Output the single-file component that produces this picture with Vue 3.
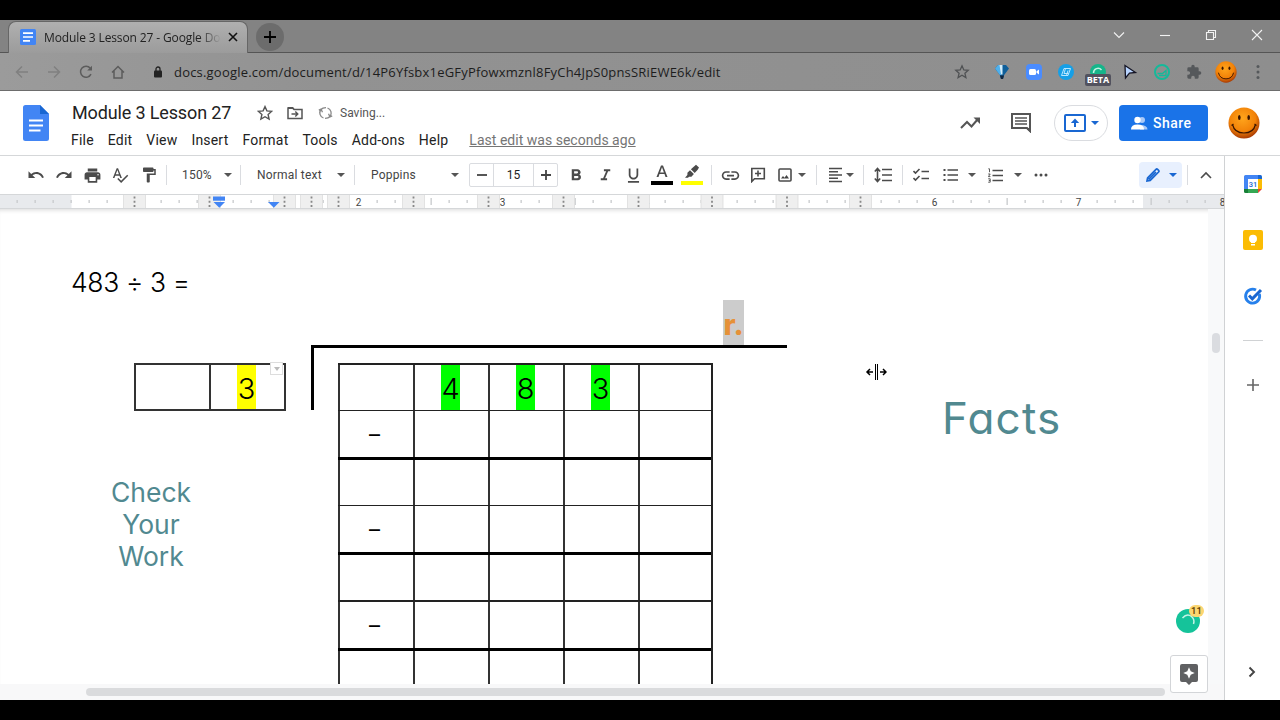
<script setup>
import { ref } from 'vue'

const menus = ['File', 'Edit', 'View', 'Insert', 'Format', 'Tools', 'Add-ons', 'Help']
const menuOpen = ref('')

// ruler: 144px per inch, 18px between ticks
const ticks = Array.from({ length: 69 }, (_, i) => i - 4).map((k) => ({
  k,
  x: 71 + k * 18,
  half: k % 8 === 4,
  label: k > 0 && k % 8 === 0 ? k / 8 : ''
}))
const columnStops = [134.5, 209.5, 284.5, 311.5, 338.5, 413.5, 488.5, 563.5, 638.5, 712, 787, 860.5]

const rows = [
  ['', '4', '8', '3', ''],
  ['–', '', '', '', ''],
  ['', '', '', '', ''],
  ['–', '', '', '', ''],
  ['', '', '', '', ''],
  ['–', '', '', '', ''],
  ['', '', '', '', '']
]
</script>

<template>
  <div class="screen">
    <!-- browser tabs -->
    <div class="tabstrip">
      <div class="tab">
        <svg class="tab-icon" width="16" height="16" viewBox="0 0 16 16">
          <rect width="16" height="16" rx="1.5" fill="#4285f4" />
          <path d="M3 4.2h10M3 8h10M3 11.8h7" stroke="#fff" stroke-width="1.7" />
        </svg>
        <span class="tab-title">Module 3 Lesson 27 - Google Do</span>
        <svg class="tab-close" width="10" height="10" viewBox="0 0 10 10"><path d="M1 1l8 8M9 1L1 9" stroke="#111" stroke-width="1.6" /></svg>
      </div>
      <div class="new-tab">
        <svg width="14" height="14" viewBox="0 0 14 14"><path d="M7 1v12M1 7h12" stroke="#000" stroke-width="1.8" /></svg>
      </div>
      <div class="window-buttons">
        <svg width="12" height="12" viewBox="0 0 12 12"><path d="M1 3.5l5 5 5-5" /></svg>
        <svg width="12" height="12" viewBox="0 0 12 12"><path d="M1 6.5h10" /></svg>
        <svg width="12" height="12" viewBox="0 0 12 12"><path d="M1.5 3.5h7v7h-7zM3.5 3V1.5h7v7H9" /></svg>
        <svg width="12" height="12" viewBox="0 0 12 12"><path d="M1 1l10 10M11 1L1 11" /></svg>
      </div>
    </div>

    <div class="addressbar">
      <svg class="nav dim" viewBox="0 0 14 14"><path d="M13 7H2M7 1.500L1.500 7 7 12.500" /></svg>
      <svg class="nav dim" viewBox="0 0 14 14"><path d="M1 7h11M7 1.500L12.500 7 7 12.500" /></svg>
      <svg class="nav" viewBox="0 0 14 14"><path d="M12 9.200A5.500 5.500 0 1 1 11.300 3.300" /><path d="M13 .8v4.800H8.200z" class="solid" /></svg>
      <svg class="nav" viewBox="0 0 14 14"><path d="M1 7.500L7 1.500l6 6M3 6v7h8V6" /></svg>
      <svg class="lock" viewBox="0 0 10 12"><rect x="1" y="4.500" width="8" height="7" rx="1" fill="#222" /><path d="M3 5V3a2 2 0 0 1 4 0v2" fill="none" stroke="#222" stroke-width="1.300" /></svg>
      <span class="url">docs.google.com/document/d/14P6Yfsbx1eGFyPfowxmznl8FyCh4JpS0pnsSRiEWE6k/edit</span>
      <div class="extensions">
        <svg width="16" height="16" viewBox="0 0 16 16"><path d="M8 1.800l1.800 4.100 4.400.4-3.300 2.900 1 4.400L8 11.300l-3.900 2.300 1-4.400L1.800 6.300l4.400-.4z" fill="none" stroke="#505254" stroke-width="1.300" /></svg>
        <svg width="16" height="16" viewBox="0 0 16 16">
          <path d="M1 4.500L4 1h8l3 3.500-4.800 6.500-1.200 4H7l-1.200-4z" fill="#0f5f9a" />
          <path d="M1 4.500L4 1h3v10H5.800z" fill="#4fb0ec" />
          <path d="M5.500 1h3v9.500H7z" fill="#d3edfb" />
          <path d="M6 11.500h4L9 15H7z" fill="#12263f" />
        </svg>
        <svg width="16" height="16" viewBox="0 0 16 16"><rect width="16" height="16" rx="4" fill="#4a8cff" /><rect x="3" y="5" width="7" height="6" rx="1.500" fill="#fff" /><path d="M10.500 7.200L13 5.500v5l-2.500-1.700z" fill="#fff" /></svg>
        <svg width="16" height="16" viewBox="0 0 16 16"><circle cx="8" cy="8" r="8" fill="#169fe6" /><path d="M6 4.500h6.500L10 11.500H3.500zM7.500 4.500L6 9.500h4.500M10 6.500L8.500 11.500" fill="none" stroke="#b9e7ff" stroke-width="1" /></svg>
        <div class="beta-ext">
          <svg width="16" height="16" viewBox="0 0 16 16"><circle cx="8" cy="8" r="8" fill="#15b58a" /><path d="M3.500 9a4.500 4.500 0 0 1 8-3" fill="none" stroke="#c2f2e2" stroke-width="1.500" /></svg>
          <span class="beta">BETA</span>
        </div>
        <svg width="16" height="16" viewBox="0 0 16 16"><path d="M3 1.500l10.500 7-6 .7L3.500 14z" fill="#b8d4ff" stroke="#151525" stroke-width="1.300" /></svg>
        <svg width="16" height="16" viewBox="0 0 16 16"><circle cx="8" cy="8" r="7" fill="none" stroke="#15b99a" stroke-width="2" /><path d="M3.500 9.500h5l3.500-3v5H5" fill="none" stroke="#15b99a" stroke-width="1.300" /></svg>
        <svg width="16" height="16" viewBox="0 0 24 24"><path d="M20.500 11H19V7a2 2 0 0 0-2-2h-4V3.500a2.500 2.500 0 0 0-5 0V5H4a2 2 0 0 0-2 2v3.800h1.500a2.700 2.700 0 0 1 0 5.400H2V20a2 2 0 0 0 2 2h3.800v-1.500a2.700 2.700 0 0 1 5.400 0V22H17a2 2 0 0 0 2-2v-4h1.500a2.500 2.500 0 0 0 0-5z" fill="#55585b" /></svg>
        <svg width="22" height="22" viewBox="0 0 32 32"><circle cx="16" cy="16" r="15.500" fill="url(#smile)" /><ellipse cx="11" cy="10.500" rx="1.400" ry="2.600" fill="#3a1500" /><ellipse cx="21" cy="10.500" rx="1.400" ry="2.600" fill="#3a1500" /><path d="M5 17q2 9 11 9t11-9" fill="none" stroke="#3a1500" stroke-width="1.400" /></svg>
        <svg width="4" height="16" viewBox="0 0 4 16" class="kebab"><circle cx="2" cy="2.500" r="1.500" /><circle cx="2" cy="8" r="1.500" /><circle cx="2" cy="13.500" r="1.500" /></svg>
      </div>
    </div>

    <!-- document header -->
    <header class="header">
      <svg class="docs-logo" width="26" height="36" viewBox="0 0 26 36">
        <path d="M2.500 0H17l9 9v24.500a2.500 2.500 0 0 1-2.500 2.500h-21A2.500 2.500 0 0 1 0 33.500v-31A2.500 2.500 0 0 1 2.500 0z" fill="#4285f4" />
        <path d="M17 0l9 9h-9z" fill="#1967d2" />
        <path d="M6 15.500h14M6 20.500h14M6 25.500h11.500" stroke="#fff" stroke-width="1.800" />
      </svg>
      <div class="title-area">
        <div class="title-row">
          <span class="doc-title">Module 3 Lesson 27</span>
          <svg class="star" width="16" height="16" viewBox="0 0 16 16"><path d="M8 1.600l1.900 4.300 4.700.5-3.500 3.100 1 4.600L8 11.700l-4.100 2.400 1-4.600-3.500-3.100 4.700-.5z" fill="none" stroke="#555" stroke-width="1.400" /></svg>
          <svg class="move" width="16" height="14" viewBox="0 0 16 14"><path d="M1 2h4.500L7 3.500h8v9H1z" fill="none" stroke="#555" stroke-width="1.500" /><path d="M1 1h5l1.500 2H1z" fill="#555" /><path d="M4.500 8h6M8.300 5.500L10.800 8l-2.500 2.500" fill="none" stroke="#555" stroke-width="1.400" /></svg>
          <svg class="sync" width="15" height="14" viewBox="0 0 15 14"><path d="M5.500 12A5.400 5.400 0 0 1 3 3.500Q4.500 1.600 8 1.600M9.500 2a5.400 5.400 0 0 1 2.500 8.500Q10.500 12.400 7 12.400M.8 4.200L3 3.200l1.500 3M14.200 9.800l-2.200 1-1.500-3" fill="none" stroke="#888" stroke-width="1.300" /></svg>
          <span class="saving">Saving...</span>
        </div>
        <nav class="menu-row">
          <span v-for="menu in menus" :key="menu" :class="['menu', { open: menuOpen === menu }]" @click="menuOpen = menu">{{ menu }}</span>
          <span class="last-edit">Last edit was seconds ago</span>
        </nav>
      </div>
      <div class="header-actions">
        <svg class="trend" width="20" height="12" viewBox="0 0 20 12"><path d="M1 11l6-6 4.500 4.500L18 2" fill="none" stroke="#555" stroke-width="2" /><path d="M13.500.5H20V7z" fill="#555" /></svg>
        <svg class="comments" width="20" height="20" viewBox="0 0 20 20"><path d="M1 1h18v17l-3-3H1z" fill="none" stroke="#555" stroke-width="2" /><path d="M4 5h12M4 8h12M4 11h12" stroke="#555" stroke-width="1.700" /><path d="M14.500 15H20v5z" fill="#555" /></svg>
        <button type="button" class="present">
          <svg width="22" height="18" viewBox="0 0 22 18"><rect x="1" y="1" width="20" height="16" rx="1" fill="none" stroke="#1967d2" stroke-width="2" /><path d="M11 13V8" stroke="#1967d2" stroke-width="2" /><path d="M6.800 9L11 4.500 15.200 9z" fill="#1967d2" /></svg>
          <i class="caret blue"></i>
        </button>
        <button type="button" class="share">
          <svg width="17" height="14" viewBox="0 0 17 14"><circle cx="11" cy="4" r="3" fill="#a9c8f8" /><path d="M9 13.500V9q7.500 0 7.500 4.500z" fill="#a9c8f8" /><circle cx="6.500" cy="4" r="3.200" fill="#fff" /><path d="M0 13.500q0-5 6.500-5t6.500 5z" fill="#fff" /></svg>
          <span>Share</span>
        </button>
        <svg class="avatar" width="32" height="32" viewBox="0 0 32 32">
          <defs>
            <radialGradient id="smile" cx="45%" cy="35%" r="65%"><stop offset="0" stop-color="#ffa51c" /><stop offset=".65" stop-color="#f28208" /><stop offset="1" stop-color="#a93b03" /></radialGradient>
          </defs>
          <circle cx="16" cy="16" r="15.500" fill="url(#smile)" /><ellipse cx="11.300" cy="10.500" rx="1.300" ry="2.600" fill="#3a1500" /><ellipse cx="20.700" cy="10.500" rx="1.300" ry="2.600" fill="#3a1500" />
          <path d="M4.500 17.500q2 8.500 11.500 8.500t11.500-8.500M3.500 18.500l2-1.500M28.500 18.500l-2-1.500" fill="none" stroke="#3a1500" stroke-width="1.200" />
        </svg>
      </div>
    </header>

    <div class="body">
      <main class="editor">
        <div class="toolbar">
          <svg width="18" height="18" viewBox="0 0 24 24" class="ic"><path d="M12.500 8c-2.650 0-5.050.99-6.900 2.600L2 7v9h9l-3.620-3.620c1.390-1.160 3.160-1.880 5.120-1.880 3.540 0 6.550 2.310 7.600 5.500l2.370-.78C21.080 11.030 17.150 8 12.500 8z" /></svg>
          <svg width="18" height="18" viewBox="0 0 24 24" class="ic"><path d="M18.400 10.600C16.550 8.990 14.150 8 11.500 8c-4.650 0-8.580 3.030-9.960 7.220L3.900 16c1.050-3.190 4.050-5.500 7.600-5.500 1.950 0 3.730.72 5.120 1.880L13 16h9V7l-3.600 3.600z" /></svg>
          <svg width="19" height="19" viewBox="0 0 24 24" class="ic"><path d="M19 8H5c-1.660 0-3 1.340-3 3v6h4v4h12v-4h4v-6c0-1.660-1.340-3-3-3zm-3 11H8v-5h8v5zm3-7c-.55 0-1-.45-1-1s.45-1 1-1 1 .45 1 1-.45 1-1 1zm-1-9H6v4h12V3z" /></svg>
          <svg width="18" height="18" viewBox="0 0 24 24" class="ic"><path d="M12.450 16h2.090L9.430 3H7.570L2.460 16h2.090l1.120-3h5.640l1.140 3zm-6.020-5L8.500 5.480 10.570 11H6.430zm15.160.59l-8.090 8.090L9.830 16l-1.410 1.410 5.090 5.090L23 13l-1.410-1.410z" /></svg>
          <svg width="18" height="18" viewBox="0 0 24 24" class="ic"><path d="M18 4V3c0-.55-.45-1-1-1H5c-.55 0-1 .45-1 1v4c0 .55.45 1 1 1h12c.55 0 1-.45 1-1V6h1v4H9v11c0 .55.45 1 1 1h2c.55 0 1-.45 1-1v-9h8V4h-3z" /></svg>
          <b class="sep"></b>
          <span class="tool-text zoom-text">150%</span><i class="caret"></i>
          <b class="sep"></b>
          <span class="tool-text">Normal text</span><i class="caret"></i>
          <b class="sep"></b>
          <span class="tool-text">Poppins</span><i class="caret"></i>
          <div class="font-size">
            <span class="step"><svg width="10" height="10" viewBox="0 0 10 10"><path d="M0 5h10" stroke="#444" stroke-width="1.800" /></svg></span>
            <span class="size">15</span>
            <span class="step"><svg width="10" height="10" viewBox="0 0 10 10"><path d="M0 5h10M5 0v10" stroke="#444" stroke-width="1.800" /></svg></span>
          </div>
          <svg width="19" height="19" viewBox="0 0 24 24" class="ic"><path d="M15.600 10.790c.97-.67 1.650-1.770 1.650-2.790 0-2.260-1.750-4-4-4H6v14h7.920c2.090 0 3.710-1.700 3.710-3.790 0-1.520-.86-2.820-2.030-3.420zM9 6.500h3.500c.83 0 1.500.67 1.500 1.500s-.67 1.500-1.500 1.500H9v-3zm4 9H9v-3h4c.83 0 1.500.67 1.500 1.500s-.67 1.500-1.500 1.500z" /></svg>
          <svg width="19" height="19" viewBox="0 0 24 24" class="ic"><path d="M10 4v2.500h2.800L9 15.500H6V18h8v-2.500h-2.500l3.800-9H18V4z" /></svg>
          <svg width="19" height="19" viewBox="0 0 24 24" class="ic"><path d="M12 17c3.310 0 6-2.690 6-6V3h-2.200v8c0 2.100-1.700 3.800-3.800 3.800S8.200 13.100 8.200 11V3H6v8c0 3.310 2.690 6 6 6zm-7 2v2h14v-2H5z" /></svg>
          <svg width="22" height="22" viewBox="0 0 22 22" class="ic"><path d="M10 1.500h2L16.500 13h-2l-1-2.900h-5L7.500 13h-2zM9.100 8.400h3.800L11 3.300z" /><rect x="0" y="17" width="22" height="4" fill="#000" /></svg>
          <svg width="22" height="22" viewBox="0 0 22 22" class="ic"><path d="M13 2.500L15 .8l3 2.700-1.300 2.300-3 3.200-3.800-3.700zM9 6.200l3.900 3.900-2.500 2.700H8l-1 .9H4l2.400-2.600V8.700z" /><rect x="0" y="17" width="22" height="4" fill="#ff0" /></svg>
          <b class="sep"></b>
          <svg width="21" height="21" viewBox="0 0 24 24" class="ic"><path d="M3.900 12c0-1.710 1.390-3.100 3.100-3.100h4V7H7c-2.760 0-5 2.240-5 5s2.240 5 5 5h4v-1.900H7c-1.710 0-3.100-1.390-3.100-3.100zM8 13h8v-2H8v2zm9-6h-4v1.900h4c1.710 0 3.100 1.390 3.100 3.100s-1.390 3.100-3.100 3.100h-4V17h4c2.760 0 5-2.240 5-5s-2.240-5-5-5z" /></svg>
          <svg width="16" height="16" viewBox="0 0 16 16" class="line"><path d="M1.800 1.500h12.500v10.300H4.500l-2.700 2.700zM8 3.500v6M5 6.500h6" /></svg>
          <svg width="14" height="14" viewBox="0 0 14 14" class="line"><rect x="1" y="1" width="12" height="12" rx="1" /><path d="M3 10.500l2-2.500 1.500 1.800L8.500 7l2.500 3.500z" fill="#444" stroke="none" /></svg>
          <i class="caret"></i>
          <b class="sep"></b>
          <svg width="15" height="16" viewBox="0 0 15 16" class="line"><path d="M1 1.500h13M1 4.700h9M1 8h13M1 11.200h9M1 14.500h13" /></svg>
          <i class="caret"></i>
          <b class="sep"></b>
          <svg width="18" height="16" viewBox="0 0 18 16" class="line"><path d="M8 2.500h10M8 8h10M8 13.500h10M3.500 3v10M.8 4.500l2.700-3 2.700 3M.8 11.500l2.700 3 2.700-3" /></svg>
          <b class="sep"></b>
          <svg width="16" height="14" viewBox="0 0 16 14" class="line"><path d="M8.500 3.500H16M8.500 10.500H16M.5 3l2 2L6.500 1M.5 10l2 2 4-4" /></svg>
          <svg width="15" height="14" viewBox="0 0 15 14" class="line"><path d="M4.500 2H15M4.500 7H15M4.500 12H15" /><path d="M.5 2h2M.5 7h2M.5 12h2" stroke-width="2" /></svg>
          <i class="caret"></i>
          <svg width="15" height="15" viewBox="0 0 15 15" class="line"><path d="M4.500 2.500H15M4.500 7.500H15M4.500 12.500H15" /><path d="M.3.800h1.200v3.400M.2 6h2L.4 8.600h2M.2 10.800h2v3.400h-2M.8 12.500h1.400" stroke-width=".9" /></svg>
          <i class="caret"></i>
          <svg width="14" height="4" viewBox="0 0 14 4" class="ic"><circle cx="2" cy="2" r="1.500" /><circle cx="7" cy="2" r="1.500" /><circle cx="12" cy="2" r="1.500" /></svg>
          <div class="mode">
            <svg width="16" height="16" viewBox="0 0 16 16"><path d="M2 14l.6-3.200L11 2.400q.8-.8 1.600 0l1 1q.8.8 0 1.600L5.200 13.400zM3.500 12.500l7.500-7.500" fill="none" stroke="#1967d2" stroke-width="1.700" /></svg>
            <i class="caret blue"></i>
          </div>
          <b class="sep"></b>
          <svg width="12" height="8" viewBox="0 0 12 8" class="line chevron"><path d="M1 7l5-5 5 5" /></svg>
        </div>

        <svg class="ruler" width="1224" height="15" viewBox="0 0 1224 15">
          <rect width="1224" height="15" fill="#fff" />
          <rect width="71.500" height="15" fill="#e8eaed" />
          <rect x="1143" width="81" height="15" fill="#e8eaed" />
          <g v-for="t in ticks" :key="t.k">
            <text v-if="t.label" :x="t.x - 0.5" y="11.500" class="ruler-label">{{ t.label }}</text>
            <rect v-else :x="t.x - 0.5" :y="t.half ? 4 : 6" width="1.300" :height="t.half ? 7 : 3" fill="#c8cacc" />
          </g>
          <g v-for="x in columnStops" :key="x">
            <rect :x="x - 11" y="0" width="22" height="15" fill="#efefef" stroke="#dcdcdc" stroke-width=".8" />
            <path :d="`M${x} 2.500v11`" stroke="#888" stroke-width="1.800" stroke-dasharray="2 2.300" />
          </g>
          <path d="M0 .5h1224M0 14.500h1224" stroke="#d5d7d9" />
          <path d="M213 2.500h12v4.200h-12z" fill="#4285f4" />
          <path d="M213.500 8h11.500l-5.700 5.800zM268 8h11.500l-5.700 5.800z" fill="#4285f4" />
        </svg>

        <div class="page-area">
          <div class="page">
            <p class="equation">483 ÷ 3 =</p>
            <div class="work">
              <div class="left-col">
                <div class="divisor">
                  <div class="cell"></div>
                  <div class="cell"><span class="digit yellow">3</span></div>
                  <span class="cell-menu"><i class="caret"></i></span>
                </div>
                <p class="check">Check<br />Your<br />Work</p>
              </div>
              <div class="division">
                <div class="quotient"><span>r.</span></div>
                <div class="bracket"></div>
                <div class="grid">
                  <div v-for="(row, r) in rows" :key="r" :class="['grid-row', 'row-' + r]">
                    <div v-for="(value, c) in row" :key="c" class="cell">
                      <span v-if="value" :class="r === 0 ? 'digit green' : 'minus'">{{ value }}</span>
                    </div>
                  </div>
                </div>
              </div>
              <p class="facts">Facts</p>
            </div>
            <svg class="cursor" width="22" height="18" viewBox="0 0 22 18"><path d="M10.500 1v16M12.500 1v16" stroke="#000" /><path d="M8 9H2M5 6L2 9l3 3M15 9h6M18 6l3 3-3 3" fill="none" stroke="#000" stroke-width="1.500" /></svg>
          </div>
          <div class="v-track"><div class="v-thumb"></div></div>
          <div class="grammar">
            <svg width="24" height="24" viewBox="0 0 24 24"><circle cx="12" cy="12" r="12" fill="#15c39a" /><path d="M6.500 9q4.500-5 9-1.500 3.500 3 2 7.500" fill="none" stroke="#c5f4e6" stroke-width="1.500" /></svg>
            <span class="count">11</span>
          </div>
          <div class="explore">
            <svg width="18" height="21" viewBox="0 0 18 21"><path d="M2 0h14a2 2 0 0 1 2 2v14a2 2 0 0 1-2 2h-4l-3 3-3-3H2a2 2 0 0 1-2-2V2a2 2 0 0 1 2-2z" fill="#5f6062" /><path d="M9 3.300l1.700 4 4 1.700-4 1.700-1.700 4-1.700-4-4-1.700 4-1.700z" fill="#fff" /></svg>
          </div>
        </div>
        <div class="h-track"><div class="h-thumb"></div></div>
      </main>

      <aside class="side-panel">
        <svg width="18" height="18" viewBox="0 0 18 18"><path d="M0 1.500Q0 0 1.500 0H14v4H4v10H0z" fill="#4285f4" /><path d="M14 0h2.500Q18 0 18 1.500V4h-4z" fill="#1967d2" /><path d="M14 4h4v10h-4z" fill="#fbbc04" /><path d="M4 14h10v4H4z" fill="#34a853" /><path d="M0 14h4v4H1.500Q0 18 0 16.500z" fill="#188038" /><path d="M14 14h4l-4 4z" fill="#ea4335" /><path d="M4 4h10v10H4z" fill="#fff" /><text x="9" y="12" class="cal">31</text></svg>
        <svg width="20" height="20" viewBox="0 0 20 20"><rect width="20" height="20" rx="2" fill="#fbbc04" /><circle cx="10" cy="8.700" r="4" fill="#fff" /><path d="M8 11h4v2H8zM8 14h4v1.500H8z" fill="#fff" /></svg>
        <svg width="20" height="20" viewBox="0 0 20 20"><path d="M16.300 8A7 7 0 1 1 13 4" fill="none" stroke="#2680eb" stroke-width="2.900" /><path d="M6 9.500l3.300 3.300L18 4" fill="none" stroke="#1a66d0" stroke-width="3" /></svg>
        <b class="rule"></b>
        <svg class="plus" width="12" height="12" viewBox="0 0 12 12"><path d="M6 0v12M0 6h12" stroke="#666" stroke-width="1.600" /></svg>
        <svg class="collapse" width="8" height="12" viewBox="0 0 8 12"><path d="M1.500 1.500L6 6l-4.500 4.500" fill="none" stroke="#444" stroke-width="1.900" /></svg>
      </aside>
    </div>
  </div>
</template>

<style>
body {
  background: #000;
}
</style>

<style scoped>
.screen {
  width: 1280px;
  height: 720px;
  padding: 20px 0;
  box-sizing: border-box;
  display: flex;
  flex-direction: column;
  background: #000;
  font-family: Roboto, sans-serif;
  color: #222;
  overflow: hidden;
}
.screen svg {
  display: block;
  flex: none;
}
p {
  margin: 0;
}
button {
  font-family: inherit;
  padding: 0;
}

/* ===== Browser chrome ===== */
.tabstrip {
  height: 33px;
  box-sizing: border-box;
  background: #838383;
  border-bottom: 1px solid #555;
  display: flex;
  flex: none;
  padding-left: 8px;
}
.tab {
  width: 240px;
  height: 33px;
  box-sizing: border-box;
  margin-top: 1px;
  padding: 0 10px 2px 12px;
  border: 1px solid #666;
  border-bottom: 0;
  border-radius: 8px 8px 0 0;
  background: linear-gradient(#b0b0b0, #a3a3a3 60%, #9b9b9b);
  display: flex;
  align-items: center;
  font-family: 'Open Sans', sans-serif;
  font-size: 12px;
}
.tab-icon {
  margin-left: -1px;
}
.tab-title {
  width: 177px;
  margin-left: 8px;
  white-space: nowrap;
  letter-spacing: -0.12px;
  color: #222;
  -webkit-mask-image: linear-gradient(90deg, #000 155px, transparent 177px);
  mask-image: linear-gradient(90deg, #000 155px, transparent 177px);
}
.tab-close {
  margin-left: 8px;
}
.new-tab {
  width: 28px;
  height: 28px;
  margin: 3px 0 0 8px;
  border-radius: 50%;
  background: #6c6c6c;
  display: grid;
  place-items: center;
}
.window-buttons {
  margin: 9px 17px 0 auto;
  display: flex;
  gap: 34px;
}
.window-buttons path {
  fill: none;
  stroke: #f2f2f2;
  stroke-width: 1.1;
}
.addressbar {
  height: 38px;
  box-sizing: border-box;
  flex: none;
  background: linear-gradient(90deg, #9b9b9b, #929292 25%, #8e8e8e);
  border-bottom: 1px solid #6d6d6d;
  display: flex;
  align-items: center;
  padding-left: 15px;
}
.nav {
  width: 14px;
  height: 14px;
  margin-right: 18px;
  fill: none;
  stroke: #5c5c5c;
  stroke-width: 1.5;
}
.nav .solid {
  fill: #5c5c5c;
  stroke: none;
}
.dim {
  stroke: #808080;
}
.lock {
  width: 10px;
  height: 12px;
  margin-left: 10px;
}
.url {
  margin-left: 11px;
  font-family: 'Open Sans', sans-serif;
  font-size: 13px;
  letter-spacing: 0.2px;
  color: #1d1d1d;
  white-space: nowrap;
}
.extensions {
  margin-left: auto;
  padding-right: 20px;
  display: flex;
  align-items: center;
  gap: 16px;
}
.extensions > :first-child {
  margin-right: 8px;
}
.extensions > :nth-last-child(2) {
  margin: 0 -3px;
}
.beta-ext {
  position: relative;
}
.beta {
  position: absolute;
  left: -5px;
  top: 10px;
  width: 26px;
  height: 12px;
  border-radius: 2px;
  background: #52525e;
  color: #fff;
  font: bold 9px/12px 'Open Sans', sans-serif;
  text-align: center;
}
.kebab {
  fill: #55585b;
  margin-left: 6px;
}

/* ===== Header ===== */
.header {
  height: 65px;
  box-sizing: border-box;
  flex: none;
  background: #fff;
  border-bottom: 1px solid #d5d7d9;
  display: flex;
}
.docs-logo {
  margin: 14px 0 0 23px;
}
.title-area {
  margin-left: 23px;
  padding-top: 8px;
}
.title-row {
  height: 27px;
  display: flex;
  align-items: center;
}
.doc-title {
  width: 159px;
  font-size: 18px;
  letter-spacing: -0.14px;
  white-space: nowrap;
}
.star {
  margin-left: 26px;
}
.move {
  margin-left: 14px;
}
.sync {
  margin-left: 15px;
}
.saving {
  margin-left: 7px;
  font-size: 12px;
  color: #555;
}
.menu-row {
  height: 28px;
  display: flex;
  align-items: center;
  font-size: 14px;
  letter-spacing: 0.2px;
  gap: 14px;
  margin-left: -1px;
}
.last-edit {
  margin-left: 7px;
  letter-spacing: 0.02px;
  color: #757575;
  text-decoration: underline;
}
.header-actions {
  margin-left: auto;
  padding-right: 20px;
  display: flex;
  align-items: center;
}
.comments {
  margin-left: 31px;
}
.present {
  width: 54px;
  height: 36px;
  margin-left: 23px;
  border: 1px solid #dadce0;
  border-radius: 18px;
  background: #fff;
  display: flex;
  align-items: center;
  justify-content: center;
  gap: 5px;
}
.share {
  width: 89px;
  height: 36px;
  margin-left: 11px;
  border: 0;
  border-radius: 4px;
  background: #1a73e8;
  color: #fff;
  font-size: 14px;
  font-weight: 500;
  letter-spacing: 0.5px;
  display: flex;
  align-items: center;
  padding-left: 12px;
  gap: 5px;
}
.avatar {
  margin-left: 20px;
}

.body {
  flex: 1;
  min-height: 0;
  display: flex;
}
.editor {
  width: 1224px;
  display: flex;
  flex-direction: column;
  background: #fff;
}

/* ===== Toolbar ===== */
.caret {
  display: block;
  width: 0;
  height: 0;
  border: 4px solid transparent;
  border-top-color: #555;
  border-bottom: 0;
}
.caret.blue {
  border-top-color: #1967d2;
}
.toolbar {
  height: 38px;
  flex: none;
  display: grid;
  grid-template-columns:
    28px 28px 28px 28px 30px 5px
    50px 18px 7px
    88px 18px 8px
    88px 18px 99px
    26px 32px 24px 33px 28px 11px
    26px 30px 24px 9px 20px
    18px 12px 15px
    24px 14px
    24px 35px 8px 38px 8px 38px 122px 11px 26px;
  justify-content: start;
  justify-items: center;
  align-items: center;
  padding-left: 22px;
}
.ic {
  fill: #4b4b4b;
}
.line {
  fill: none;
  stroke: #4b4b4b;
  stroke-width: 1.6;
}
.sep {
  width: 1px;
  height: 20px;
  background: #dadce0;
}
.tool-text {
  justify-self: start;
  font-size: 12px;
  color: #444;
  white-space: nowrap;
  padding-left: 13px;
  letter-spacing: 0.2px;
}
.font-size {
  display: flex;
  width: 89px;
  height: 24px;
  box-sizing: border-box;
  border: 1px solid #dadce0;
  border-radius: 2px;
}
.step {
  flex: 1;
  display: grid;
  place-items: center;
}
.size {
  width: 39px;
  text-align: center;
  font-size: 12px;
  line-height: 22px;
  border: 1px solid #dadce0;
  border-width: 0 1px;
}
.mode {
  justify-self: end;
  width: 43px;
  height: 26px;
  border-radius: 4px;
  background: #e8f0fe;
  display: flex;
  align-items: center;
  justify-content: center;
  gap: 8px;
}
.ruler-label {
  font: 10px Roboto, sans-serif;
  fill: #444;
  text-anchor: middle;
}

/* ===== Page ===== */
.page-area {
  flex: 1;
  min-height: 0;
  position: relative;
  display: flex;
  box-shadow: inset 0 4px 4px -3px #d8d8d8;
}
.page {
  width: 1208px;
  overflow: hidden;
}
.equation {
  height: 91px;
  box-sizing: border-box;
  padding: 57px 0 0 71px;
  font: 350 26.5px/32px Inter, sans-serif;
  letter-spacing: -0.35px;
  color: #000;
  white-space: nowrap;
}
.work {
  display: flex;
  font-family: Inter, sans-serif;
}
.left-col {
  width: 152px;
  margin: 63px 0 0 134px;
}
.divisor {
  position: relative;
  display: flex;
  width: 152px;
  height: 48px;
  box-sizing: border-box;
  border: 2px solid #333;
  border-width: 2px 2px 2px 0;
}
.divisor .cell {
  height: 44px;
}
.cell {
  width: 75px;
  box-sizing: border-box;
  padding-right: 2px;
  border-left: 2px solid #333;
  display: flex;
  justify-content: center;
  align-items: stretch;
}
.digit {
  width: 19px;
  display: block;
  text-align: center;
  font-size: 29px;
  font-weight: 350;
  line-height: 48px;
  color: #000;
}
.yellow {
  height: 44px;
  background: #ff0;
}
.green {
  height: 45px;
  background: #0f0;
}
.cell-menu {
  position: absolute;
  right: 1px;
  top: -3px;
  width: 11px;
  height: 11px;
  border: 1px solid #ddd;
  background: #fff;
  display: grid;
  place-items: center;
}
.cell-menu .caret {
  border-width: 4px 3.5px 0;
  border-top-color: #bbb;
}
.check {
  width: 90px;
  margin: 65px 0 0 -28px;
  font-size: 26.5px;
  line-height: 32px;
  text-align: center;
  color: #518990;
  font-feature-settings: 'cv11';
}
.division {
  width: 476px;
  margin-left: 25px;
}
.quotient {
  height: 45px;
  display: flex;
  justify-content: flex-end;
  padding-right: 43px;
}
.quotient span {
  width: 21px;
  background: #ccc;
  color: #e69138;
  font-size: 29px;
  font-weight: 800;
  line-height: 49px;
  letter-spacing: -0.3px;
  text-align: center;
}
.bracket {
  height: 65px;
  box-sizing: border-box;
  border: 3px solid #000;
  border-width: 3px 0 0 3px;
}
.grid {
  width: 375px;
  margin: -47px 0 0 27px;
  box-sizing: border-box;
  border-right: 2px solid #222;
}
.grid-row {
  display: flex;
  height: 47px;
  box-sizing: border-box;
  border-top: 2px solid #222;
}
.grid-row .cell:last-child {
  width: 73px;
}
.row-1 {
  border-top-width: 1px;
}
.row-2,
.row-4,
.row-6 {
  height: 48px;
  border-top: 3px solid #000;
}
.row-3 {
  border-top-width: 1px;
}
.row-5 {
  height: 48px;
}
.minus {
  margin-left: -2px;
  font-size: 22px;
  line-height: 46px;
  color: #000;
}
.facts {
  margin: 88px 0 0 155px;
  font-size: 44px;
  line-height: 60px;
  letter-spacing: 1.2px;
  color: #518990;
  font-feature-settings: 'cv11';
}
.cursor {
  position: absolute;
  left: 865px;
  top: 154px;
}
.v-track {
  width: 16px;
  background: #f8f9fa;
}
.v-thumb {
  width: 8px;
  height: 20px;
  margin: 124px 0 0 4px;
  border-radius: 4px;
  background: #dadce0;
}
.h-track {
  height: 16px;
  flex: none;
  background: #f8f8f9;
  padding: 4px 0 0 86px;
  box-sizing: border-box;
}
.h-thumb {
  width: 1079px;
  height: 8px;
  border-radius: 4px;
  background: #dadbdd;
}
.grammar {
  position: absolute;
  left: 1176px;
  top: 400px;
}
.count {
  position: absolute;
  left: 13px;
  top: -4px;
  width: 15px;
  height: 12px;
  border-radius: 6px;
  background: #fbd671;
  color: #5c3b00;
  font: 500 9.5px/12px Roboto, sans-serif;
  text-align: center;
}
.explore {
  position: absolute;
  left: 1170px;
  top: 446px;
  width: 36px;
  height: 36px;
  border: 1px solid #d3d5d8;
  border-radius: 3px;
  background: #fff;
  display: grid;
  place-items: center;
}

/* ===== Side panel ===== */
.side-panel {
  flex: 1;
  border-left: 1px solid #d0d2d4;
  background: #fff;
  display: flex;
  flex-direction: column;
  align-items: center;
  padding-top: 19px;
  box-sizing: border-box;
}
.side-panel > :nth-child(2) {
  margin-top: 37px;
}
.side-panel > :nth-child(3) {
  margin-top: 36px;
}
.cal {
  font: 500 7.5px Roboto, sans-serif;
  fill: #1967d2;
  text-anchor: middle;
}
.rule {
  width: 20px;
  height: 1px;
  margin-top: 34px;
  background: #d0d2d4;
}
.plus {
  margin-top: 38px;
}
.collapse {
  margin: auto 1px 22px 0;
}
</style>
